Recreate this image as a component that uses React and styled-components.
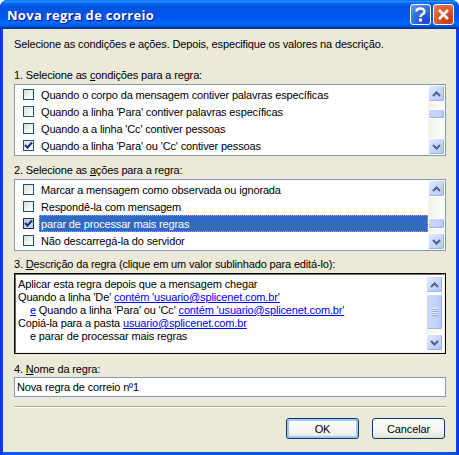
import React from 'react'
import styled, { createGlobalStyle } from 'styled-components'

const Global = createGlobalStyle`
  html, body { margin: 0; padding: 0; background: #fff; }
  * { box-sizing: border-box; }
`

const Win = styled.div`
  width: 459px;
  height: 455px;
  display: flex;
  flex-direction: column;
  background: linear-gradient(90deg, #0831d9 0%, #0a5ae8 1%, #0855dd 99%, #0831d9 100%);
  border-radius: 7px 7px 0 0;
  overflow: hidden;
  font-family: "Liberation Sans", Arial, sans-serif;
  font-size: 11px;
  letter-spacing: -0.15px;
  color: #000;
`

const TitleBar = styled.div`
  height: 29px;
  flex: none;
  display: flex;
  align-items: center;
  justify-content: space-between;
  padding: 0 5px 0 7px;
  background: linear-gradient(180deg, #0058ee 0%, #3593ff 4%, #288eff 6%, #127dff 8%, #036ffc 10%, #0262ee 14%, #0057e5 20%, #0054e3 24%, #0055eb 56%, #005bf5 66%, #026afe 76%, #0062ef 86%, #0052d6 92%, #0040ab 94%, #003092 100%);
`

const Title = styled.span`
  font-family: "Open Sans", sans-serif;
  font-weight: bold;
  font-size: 13px;
  letter-spacing: 0.3px;
  color: #fff;
  text-shadow: 1px 1px 1px #0f1089;
`

const TitleButtons = styled.div`
  display: flex;
  gap: 2px;
`

const TitleButton = styled.div`
  width: 21px;
  height: 21px;
  border: 1px solid #fff;
  border-radius: 3px;
  display: flex;
  align-items: center;
  justify-content: center;
  background: ${p => p.$close
    ? 'radial-gradient(circle at 75% 80%, #c43a0c 0%, #d95a30 55%, #e8815c 100%)'
    : 'radial-gradient(circle at 80% 85%, #1a46c8 0%, #3c6fe0 60%, #7a9ff0 100%)'};
`

const Frame = styled.div`
  flex: 1;
  display: flex;
  margin: 0 4px 3px 3px;
  min-height: 0;
`

const Body = styled.div`
  flex: 1;
  background: #ece9d8;
  padding: 0 10px 0 11px;
  display: flex;
  flex-direction: column;
`

const Label = styled.div`
  height: 13px;
  line-height: 13px;
  white-space: nowrap;
  margin-top: ${p => p.$top}px;
`

const Key = styled.span`
  text-decoration: underline;
`

const Box = styled.div`
  width: 432px;
  height: 72px;
  flex: none;
  margin-top: 2px;
  display: flex;
  background: #fff;
  border: 1px solid #7f9db9;
`

const List = styled.div`
  flex: 1;
  min-width: 0;
  padding-top: 1px;
`

const Row = styled.div`
  height: 17px;
  display: flex;
  align-items: center;
  padding-left: 8px;
`

const Check = styled.div`
  width: 11px;
  height: 11px;
  flex: none;
  border: 1px solid ${p => p.$focus ? '#1c2c60' : '#1c5180'};
  background: ${p => p.$focus ? '#c4cfe8' : 'linear-gradient(135deg, #dcdcd7 0%, #fff 90%)'};
  display: flex;
  align-items: center;
  justify-content: center;
`

const RowText = styled.div`
  height: 17px;
  line-height: 18px;
  margin-left: 5px;
  padding: 0 2px;
  white-space: nowrap;
  flex: ${p => p.$selected ? 1 : 'none'};
  background: ${p => p.$selected ? '#316ac5' : 'transparent'};
  color: ${p => p.$selected ? '#fff' : '#000'};
  outline: ${p => p.$selected ? '1px dotted #d8a040' : 'none'};
  outline-offset: -1px;
`

const Scroll = styled.div`
  width: 17px;
  flex: none;
  display: flex;
  flex-direction: column;
  justify-content: space-between;
  background: linear-gradient(90deg, #f3f1ec 0%, #fefefb 100%);
  position: relative;
`

const Arrow = styled.div`
  height: 17px;
  flex: none;
  border: 1px solid #fff;
  border-radius: 2px;
  background: linear-gradient(135deg, #e1eafe 0%, #c3d3fd 60%, #aec6f8 100%);
  box-shadow: inset -1px -1px 0 #9bb3e8;
  display: flex;
  align-items: center;
  justify-content: center;
`

const Thumb = styled.div`
  position: absolute;
  left: 0;
  right: 0;
  top: ${p => p.$top}px;
  height: ${p => p.$h}px;
  border: 1px solid #fff;
  border-radius: 2px;
  background: linear-gradient(90deg, #c9d7fc 0%, #c3d3fd 60%, #b4c9f8 100%);
  box-shadow: inset -1px -1px 0 #9bb3e8;
  display: flex;
  align-items: center;
  justify-content: center;
`

const Grip = styled.div`
  width: 6px;
  height: 8px;
  background: repeating-linear-gradient(180deg, #eef3fe 0 1px, #8da9e6 1px 2px);
`

const DescBox = styled.div`
  width: 432px;
  height: 81px;
  flex: none;
  margin-top: 2px;
  display: flex;
  background: #fff;
  border: 2px solid;
  border-color: #716f64 #f1efe2 #f1efe2 #716f64;
  outline: 1px solid #000;
  outline-offset: -1px;
  padding: 1px;
`

const Desc = styled.div`
  flex: 1;
  min-width: 0;
  padding: 2px 0 0 1px;
`

const Line = styled.div`
  height: 13px;
  line-height: 13px;
  white-space: nowrap;
  padding-left: ${p => p.$indent ? 12 : 0}px;
`

const LinkText = styled.a`
  color: #0000ff;
  text-decoration: underline;
`

const Input = styled.div`
  width: 432px;
  height: 20px;
  flex: none;
  margin-top: 1px;
  border: 1px solid #7f9db9;
  background: #fff;
  padding-left: 2px;
  line-height: 18px;
`

const Sep = styled.div`
  width: 432px;
  height: 2px;
  flex: none;
  margin-top: 9px;
  background: #aca899;
  border-bottom: 1px solid #fff;
`

const Buttons = styled.div`
  display: flex;
  justify-content: flex-end;
  gap: 13px;
  width: 431px;
  margin-top: 10px;
`

const Button = styled.div`
  width: 73px;
  height: 21px;
  border: 1px solid #003c74;
  border-radius: 3px;
  display: flex;
  align-items: center;
  justify-content: center;
  background: linear-gradient(180deg, #fff 0%, #f0f0ea 85%, #dcd8c8 100%);
  box-shadow: ${p => p.$def ? 'inset 0 0 0 2px #a9c4ee' : 'none'};
`

const CheckMark = () => (
  <svg width="9" height="9" viewBox="0 0 9 9">
    <path d="M1 4 L3.5 6.5 L8 1.5" fill="none" stroke="#1c2c80" strokeWidth="2" />
  </svg>
)

const Chevron = ({ up }) => (
  <svg width="9" height="6" viewBox="0 0 9 6">
    <path d={up ? 'M1 5 L4.5 1.5 L8 5' : 'M1 1 L4.5 4.5 L8 1'} fill="none" stroke="#4d6185" strokeWidth="2" />
  </svg>
)

const ScrollBar = ({ top, h, grip }) => (
  <Scroll>
    <Arrow><Chevron up /></Arrow>
    <Thumb $top={top} $h={h}>{grip && <Grip />}</Thumb>
    <Arrow><Chevron /></Arrow>
  </Scroll>
)

const conditions = [
  'Quando o corpo da mensagem contiver palavras específicas',
  "Quando a linha 'Para' contiver palavras específicas",
  "Quando a a linha 'Cc' contiver pessoas",
  "Quando a linha 'Para' ou 'Cc' contiver pessoas",
]

const actions = [
  'Marcar a mensagem como observada ou ignorada',
  'Respondê-la com mensagem',
  'parar de processar mais regras',
  'Não descarregá-la do servidor',
]

export default function App() {
  return (
    <Win>
      <Global />
      <TitleBar>
        <Title>Nova regra de correio</Title>
        <TitleButtons>
          <TitleButton>
            <svg width="13" height="15" viewBox="0 0 13 15">
              <path d="M2.5 4.5 C2.5 0.5 10.5 0.5 10.5 4.5 C10.5 7.5 6.5 7 6.5 10" fill="none" stroke="#fff" strokeWidth="2.4" />
              <rect x="5" y="11.5" width="3" height="3" fill="#fff" />
            </svg>
          </TitleButton>
          <TitleButton $close>
            <svg width="13" height="13" viewBox="0 0 13 13">
              <path d="M2 2 L11 11 M11 2 L2 11" fill="none" stroke="#fff" strokeWidth="2.6" />
            </svg>
          </TitleButton>
        </TitleButtons>
      </TitleBar>
      <Frame>
        <Body>
          <Label $top={9}>Selecione as condições e ações. Depois, especifique os valores na descrição.</Label>
          <Label $top={18}>1. Selecione as <Key>c</Key>ondições para a regra:</Label>
          <Box>
            <List>
              {conditions.map((c, i) => (
                <Row key={c}>
                  <Check>{i === 3 && <CheckMark />}</Check>
                  <RowText>{c}</RowText>
                </Row>
              ))}
            </List>
            <ScrollBar top={24} h={10} />
          </Box>
          <Label $top={8}>2. Selecione as <Key>a</Key>ções para a regra:</Label>
          <Box>
            <List>
              {actions.map((a, i) => (
                <Row key={a}>
                  <Check $focus={i === 2}>{i === 2 && <CheckMark />}</Check>
                  <RowText $selected={i === 2}>{a}</RowText>
                </Row>
              ))}
            </List>
            <ScrollBar top={38} h={11} />
          </Box>
          <Label $top={7}>3. <Key>D</Key>escrição da regra (clique em um valor sublinhado para editá-lo):</Label>
          <DescBox>
            <Desc>
              <Line>Aplicar esta regra depois que a mensagem chegar</Line>
              <Line>Quando a linha 'De' <LinkText>contém 'usuario@splicenet.com.br'</LinkText></Line>
              <Line $indent><LinkText>e</LinkText> Quando a linha 'Para' ou 'Cc' <LinkText>contém 'usuario@splicenet.com.br'</LinkText></Line>
              <Line>Copiá-la para a pasta <LinkText>usuario@splicenet.com.br</LinkText></Line>
              <Line $indent>e parar de processar mais regras</Line>
            </Desc>
            <ScrollBar top={18} h={36} grip />
          </DescBox>
          <Label $top={9}>4. <Key>N</Key>ome da regra:</Label>
          <Input>Nova regra de correio nº1</Input>
          <Sep />
          <Buttons>
            <Button $def>OK</Button>
            <Button>Cancelar</Button>
          </Buttons>
        </Body>
      </Frame>
    </Win>
  )
}
